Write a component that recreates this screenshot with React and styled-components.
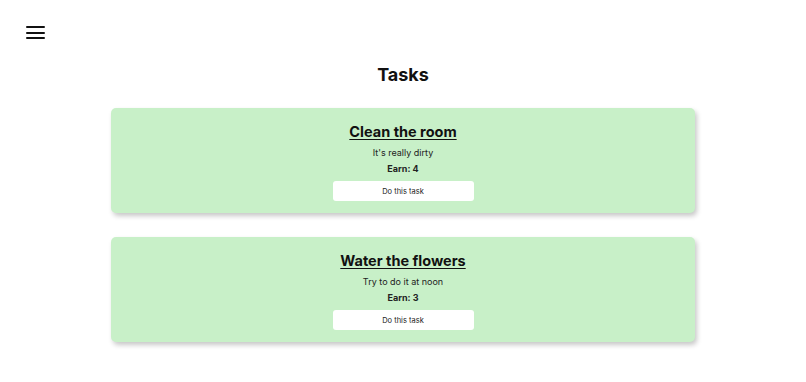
import React from 'react';
import styled, { createGlobalStyle } from 'styled-components';

const GlobalStyle = createGlobalStyle`
    body {
        margin: 0;
        background: #ffffff;
        font-family: Inter, "Noto Sans", sans-serif;
        color: #111;
    }
`

const Page = styled.div`
    min-height: 382px;
    padding: 26px 0 40px;
    box-sizing: border-box;
`

const MenuButton = styled.button`
    display: flex;
    flex-direction: column;
    justify-content: space-between;
    width: 19px;
    height: 13px;
    margin-left: 26px;
    padding: 0;
    border: none;
    background: none;
    cursor: pointer;
`

const MenuLine = styled.span`
    display: block;
    height: 2px;
    border-radius: 1px;
    background: #111;
`

const Header = styled.h1`
    margin: 25px 0 0;
    font-size: 18px;
    font-weight: 700;
    text-align: center;
    line-height: 22px;
`

const TaskList = styled.div`
    display: flex;
    flex-direction: column;
    align-items: center;
    gap: 24px;
    margin-top: 22px;
`

const TaskCard = styled.div`
    width: 584px;
    height: 105px;
    box-sizing: border-box;
    padding: 15px 0 0;
    background: #c8f0c8;
    border-radius: 5px;
    box-shadow: 2px 3px 5px rgba(0, 0, 0, 0.22);
    display: flex;
    flex-direction: column;
    align-items: center;
`

const TaskTitle = styled.h2`
    margin: 0;
    font-size: 14.5px;
    line-height: 18px;
    font-weight: 700;
    text-decoration: underline;
    text-underline-offset: 2px;
`

const Text = styled.p`
    margin: ${props => props.bold ? '2px' : '5px'} 0 0;
    font-size: 9px;
    line-height: 14px;
    color: #222;
    font-weight: ${props => props.bold ? 700 : 400};
`

const TaskButton = styled.button`
    margin-top: 5px;
    width: 141px;
    height: 20px;
    padding: 0;
    border: none;
    border-radius: 3px;
    background: #fff;
    font-family: Inter, "Noto Sans", sans-serif;
    font-size: 7.5px;
    color: #222;
    cursor: pointer;
`

const tasks = [
    { title: 'Clean the room', description: "It's really dirty", earn: 4 },
    { title: 'Water the flowers', description: 'Try to do it at noon', earn: 3 },
]

const App = () => (
    <Page>
        <GlobalStyle />
        <MenuButton aria-label="menu">
            <MenuLine />
            <MenuLine />
            <MenuLine />
        </MenuButton>
        <Header>Tasks</Header>
        <TaskList>
            {tasks.map((task, index) => (
                <TaskCard key={index}>
                    <TaskTitle>{task.title}</TaskTitle>
                    <Text>{task.description}</Text>
                    <Text bold>Earn: {task.earn}</Text>
                    <TaskButton>Do this task</TaskButton>
                </TaskCard>
            ))}
        </TaskList>
    </Page>
)

export default App;
